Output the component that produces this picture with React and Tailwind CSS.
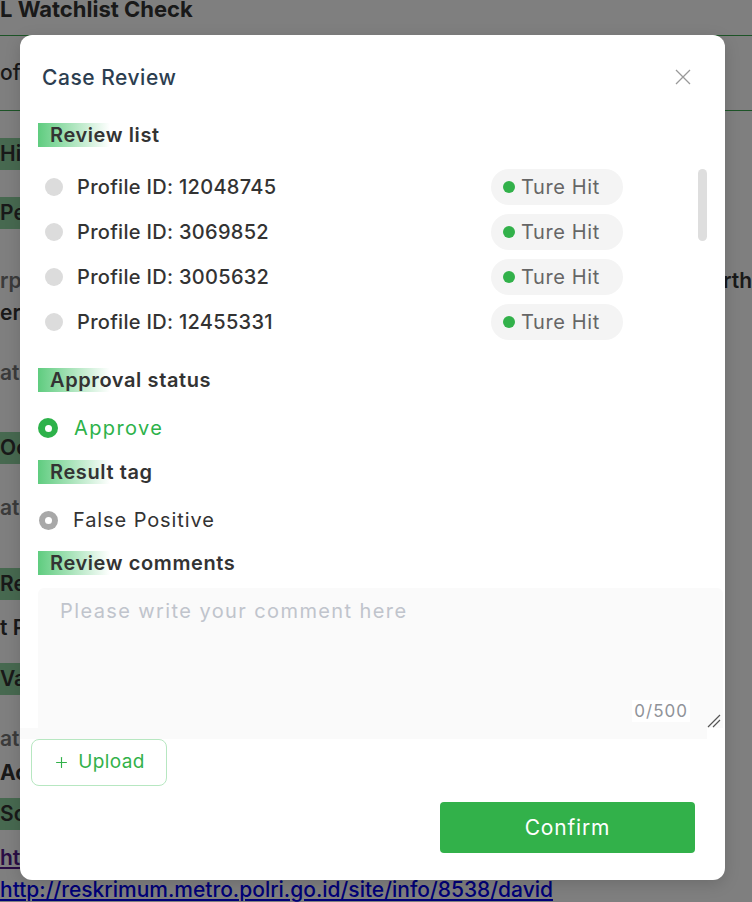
import React from "react";
import { Plus } from "lucide-react";

const profiles = ["12048745", "3069852", "3005632", "12455331"];

// little green gradient tab that sits behind every section title
function SectionTitle({ children }) {
  return (
    <div className="h-[24px] flex items-center pl-[12px] bg-[linear-gradient(90deg,#5fcc7f,#ffffff)] bg-no-repeat bg-[length:72px_100%] text-[20px] leading-none font-semibold text-[#333] tracking-[0.03em]">
      {children}
    </div>
  );
}

function HitTag() {
  return (
    <div className="h-[36px] w-[132px] rounded-full bg-[#f4f4f4] flex items-center pl-[12px] gap-[6px]">
      <span className="w-[12px] h-[12px] rounded-full bg-[#32b14a]" />
      <span className="text-[20px] text-[#666] leading-none tracking-[0.03em]">Ture Hit</span>
    </div>
  );
}

function BackPage() {
  // the detail page that sits under the dialog
  const green = "bg-[#8fd3a0]";
  return (
    <div className="flex flex-col text-[21px] font-semibold text-[#333]">
      <div className="h-[34px] flex items-start -mt-[7px] text-[22px] font-bold">L Watchlist Check</div>
      <div className="h-px bg-[#3aa84f] mt-[8px]" />
      <div className="h-[74px] flex items-center font-medium">ofi</div>
      <div className="h-px bg-[#3aa84f]" />
      <div className="mt-[32px] h-[22px] flex items-center">
        <span className={`${green} pr-[2px]`}>Hit</span>
      </div>
      <div className="mt-[37px] h-[22px] flex items-center">
        <span className={green}>Per</span>
      </div>
      <div className="mt-[46px] h-[22px] flex items-center justify-between text-[#777]">
        <span>rpe</span>
        <span className="text-[#333]">rth</span>
      </div>
      <div className="mt-[10px] h-[22px] flex items-center">ers</div>
      <div className="mt-[38px] h-[22px] flex items-center text-[#777]">ati</div>
      <div className="mt-[53px] h-[22px] flex items-center">
        <span className={green}>Oc</span>
      </div>
      <div className="mt-[38px] h-[22px] flex items-center text-[#777]">ate</div>
      <div className="mt-[54px] h-[22px] flex items-center">
        <span className={green}>Rea</span>
      </div>
      <div className="mt-[22px] h-[22px] flex items-center">t P</div>
      <div className="mt-[29px] h-[22px] flex items-center">
        <span className={green}>Va</span>
      </div>
      <div className="mt-[38px] h-[22px] flex items-center text-[#777]">at</div>
      <div className="mt-[12px] h-[22px] flex items-center font-bold">Ac</div>
      <div className="mt-[19px] h-[22px] flex items-center">
        <span className={green}>Sou</span>
      </div>
      <div className="mt-[22px] h-[22px] flex items-center text-[#551a8b] underline">http</div>
      <div className="mt-[9px] h-[24px] flex items-center text-[#0000ee] underline font-medium">
        http://reskrimum.metro.polri.go.id/site/info/8538/david
      </div>
    </div>
  );
}

export default function App() {
  return (
    <div className="relative w-[752px] h-[902px] overflow-hidden bg-white font-['Inter','Liberation_Sans',sans-serif]">
      <BackPage />
      <div className="absolute inset-0 bg-black/50" />

      <div className="absolute left-[20px] top-[35px] w-[705px] h-[845px] rounded-[12px] bg-white shadow-[0_4px_16px_rgba(0,0,0,0.15)] flex flex-col">
        <div className="flex items-center justify-between pt-[30px] pl-[22px] pr-[34px] h-[24px] box-content">
          <span className="text-[21px] font-medium text-[#2c3e50] leading-none tracking-[0.025em]">Case Review</span>
          <svg width="16" height="16" viewBox="0 0 16 16">
            <path d="M1 1 L15 15 M15 1 L1 15" stroke="#999" strokeWidth="1.3" />
          </svg>
        </div>

        <div className="pl-[18px] mt-[34px]">
          <SectionTitle>Review list</SectionTitle>

          <div className="flex mt-[22px]">
            <div className="flex flex-col gap-[9px]">
              {profiles.map((id) => (
                <div key={id} className="flex items-center h-[36px]">
                  <div className="w-[453px] flex items-center pl-[7px] gap-[14px]">
                    <span className="w-[18px] h-[18px] rounded-full bg-[#dcdcdc]" />
                    <span className="text-[20px] font-medium text-[#333] leading-none tracking-[0.015em]">
                      Profile ID: {id}
                    </span>
                  </div>
                  <HitTag />
                </div>
              ))}
            </div>
            <div className="ml-[75px] w-[9px] h-[72px] rounded-full bg-[#dedede]" />
          </div>

          <div className="mt-[28px]">
            <SectionTitle>Approval status</SectionTitle>
          </div>
          <div className="flex items-center gap-[16px] h-[24px] mt-[24px]">
            <span className="w-[20px] h-[20px] rounded-full bg-[#2db24a] flex items-center justify-center">
              <span className="w-[7px] h-[7px] rounded-full bg-white" />
            </span>
            <span className="text-[20px] text-[#2db24a] leading-none tracking-[0.07em]">Approve</span>
          </div>

          <div className="mt-[20px]">
            <SectionTitle>Result tag</SectionTitle>
          </div>
          <div className="flex items-center gap-[16px] h-[24px] mt-[24px]">
            <span className="ml-px w-[19px] h-[19px] rounded-full bg-[#a8a8a8] flex items-center justify-center">
              <span className="w-[7px] h-[7px] rounded-full bg-white" />
            </span>
            <span className="text-[20px] text-[#333] leading-none -ml-px tracking-[0.045em]">False Positive</span>
          </div>

          <div className="mt-[19px]">
            <SectionTitle>Review comments</SectionTitle>
          </div>
          <div className="relative mt-[13px] w-[685px] h-[140px] rounded-t-[6px] bg-[#fafafa] pl-[22px] pt-[12px]">
            <span className="text-[20px] text-[#c0c4cc] leading-none tracking-[0.07em]">
              Please write your comment here
            </span>
            <span className="absolute right-[33px] bottom-[6px] px-[2px] bg-white text-[17px] text-[#909399] leading-[22px] tracking-[0.06em]">
              0/500
            </span>
            <svg className="absolute right-[2px] bottom-[0px]" width="14" height="14" viewBox="0 0 14 14">
              <path d="M1 13 L13 1 M6 13 L13 6" stroke="#555" strokeWidth="1.2" />
            </svg>
          </div>
        </div>
        <div className="w-[687px] h-[11px] bg-[#fafafa]" />

        <div className="pl-[11px]">
          <button className="w-[136px] h-[47px] rounded-[8px] border border-[#b7e7c1] bg-white flex items-center justify-center gap-[8px] text-[19px] text-[#32b14a] tracking-[0.02em]">
            <Plus size={17} strokeWidth={1.6} />
            Upload
          </button>
        </div>

        <div className="flex justify-end pr-[30px] mt-[16px]">
          <button className="w-[255px] h-[51px] rounded-[4px] bg-[#32b14a] text-white text-[21px] leading-none tracking-[0.04em]">
            Confirm
          </button>
        </div>
      </div>
    </div>
  );
}
